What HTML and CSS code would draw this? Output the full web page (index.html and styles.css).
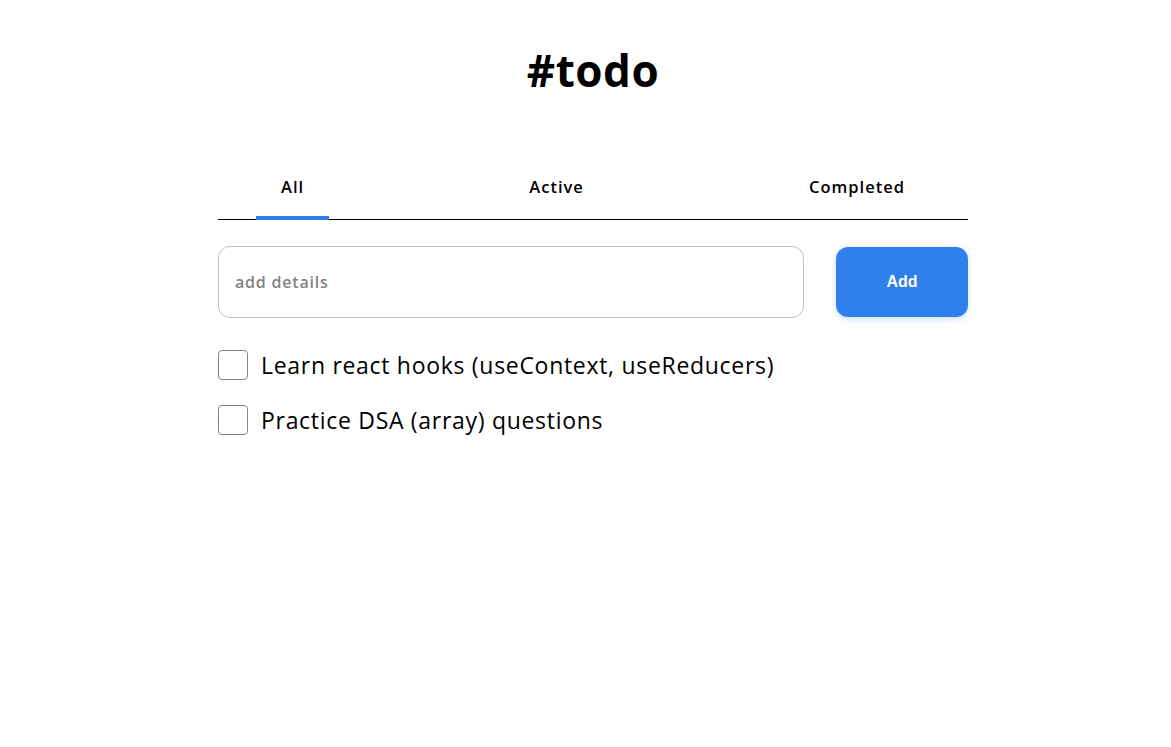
FILE: index.html
```html
<!DOCTYPE html>
<html lang="en">
<head>
<meta charset="utf-8">
<title>#todo</title>
<link rel="stylesheet" href="styles.css">
</head>
<body>
<main class="app">
  <h1 class="title">#todo</h1>
  <nav class="tabs">
    <button class="tab tab-active">All</button>
    <button class="tab">Active</button>
    <button class="tab">Completed</button>
  </nav>
  <form class="add-form">
    <input class="add-input" type="text" placeholder="add details">
    <button class="add-btn" type="button">Add</button>
  </form>
  <ul class="list">
    <li class="item"><span class="box"></span><span class="item-text">Learn react hooks (useContext, useReducers)</span></li>
    <li class="item"><span class="box"></span><span class="item-text">Practice DSA (array) questions</span></li>
  </ul>
</main>
</body>
</html>
```
FILE: styles.css
```css
* { box-sizing: border-box; }
html, body { margin: 0; padding: 0; background: #fff; }
body {
  font-family: "Open Sans", "Noto Sans", sans-serif;
  color: #000;
  padding-left: 15px;
}

.app {
  width: 750px;
  margin: 0 auto;
  padding-top: 40px;
}

.title {
  margin: 0;
  text-align: center;
  font-size: 44px;
  font-weight: 700;
  line-height: 60px;
  letter-spacing: 0.5px;
}

.tabs {
  margin-top: 70px;
  display: flex;
  justify-content: space-between;
  padding: 0 38px;
  border-bottom: 1px solid #000;
}

.tab {
  background: none;
  border: 0;
  font-family: inherit;
  font-size: 16.5px;
  font-weight: 600;
  color: #000;
  padding: 6px 25px 18px;
  border-bottom: 4px solid transparent;
  margin-bottom: -1px;
  line-height: 22px;
  letter-spacing: 1px;
  cursor: pointer;
}
.tab-active { border-bottom-color: #2f80ed; }

.add-form {
  display: flex;
  gap: 32px;
  margin-top: 26px;
  align-items: center;
}

.add-input {
  flex: 1;
  height: 72px;
  border: 1px solid #bdbdbd;
  border-radius: 12px;
  padding: 0 16px;
  font-family: inherit;
  font-size: 16px;
  font-weight: 600;
  letter-spacing: 0.8px;
  outline: none;
}
.add-input::placeholder { color: #828282; }

.add-btn {
  width: 132px;
  height: 70px;
  border: 0;
  border-radius: 12px;
  background: #2f80ed;
  color: #fff;
  font-family: "Liberation Sans", Arial, sans-serif;
  font-size: 16px;
  font-weight: 700;
  box-shadow: 0 2px 6px rgba(127, 177, 243, 0.4);
  cursor: pointer;
}

.list {
  list-style: none;
  margin: 32px 0 0;
  padding: 0;
}

.item {
  display: flex;
  align-items: center;
  gap: 13px;
  height: 30px;
  margin-bottom: 25px;
}

.box {
  width: 30px;
  height: 30px;
  border: 1px solid #828282;
  border-radius: 4px;
  flex: none;
}

.item-text {
  font-size: 23px;
  font-weight: 400;
  letter-spacing: 0.7px;
}
```
